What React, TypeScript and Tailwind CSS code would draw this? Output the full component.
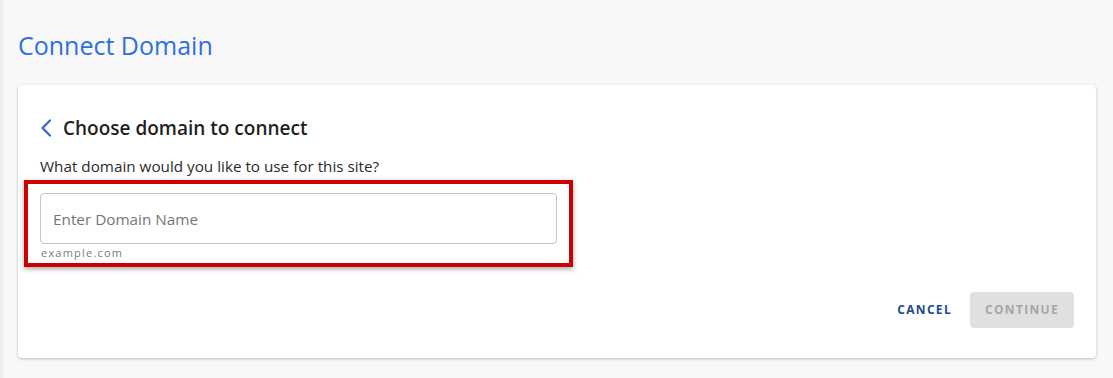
export default function App() {
  return (
    <div
      className="min-h-screen bg-[#f8f8f8] pl-[18px] pr-[17px] pt-[29px] shadow-[inset_6px_0_6px_-6px_rgba(0,0,0,0.12)]"
      style={{ fontFamily: '"Open Sans", "Noto Sans", sans-serif' }}
    >
      <h1 className="text-[25px] leading-[32px] text-[#2e6fe0]">Connect Domain</h1>

      <div className="mt-[24px] h-[273px] rounded-[4px] bg-white px-[22px] pt-[30px] shadow-[0_1px_3px_rgba(0,0,0,0.25)]">
        <div className="flex items-center">
          <button className="flex h-[26px] w-[12px] items-center justify-center text-[#2a6ad9]">
            <svg width="12" height="18" viewBox="0 0 12 18" fill="none" stroke="currentColor" strokeWidth="2.2" strokeLinecap="round" strokeLinejoin="round">
              <polyline points="10,1.5 2.5,9 10,16.5" />
            </svg>
          </button>
          <h2 className="ml-[11px] text-[19px] font-semibold leading-[26px] text-[#1f1f1f]">Choose domain to connect</h2>
        </div>

        <p className="mt-[14px] text-[15.25px] leading-[22px] text-[#2b2b2b]">
          What domain would you like to use for this site?
        </p>

        <div className="-mx-[16px] mt-[3px] w-[549px] border-[4px] border-[#cc0000] px-[12px] pb-[3px] pt-[9px] shadow-[0_2px_5px_rgba(0,0,0,0.35)]">
          <input
            type="text"
            placeholder="Enter Domain Name"
            className="block h-[51px] w-full rounded-[4px] border border-[#c4c4c4] bg-white px-[12px] text-[15.3px] text-[#333] placeholder:text-[#767676] outline-none"
          />
          <div className="mt-[2px] pl-[1px] text-[11px] leading-[14px] tracking-[0.11em] text-[#7a7a7a]">example.com</div>
        </div>

        <div className="mt-[25px] flex items-center justify-end gap-[2px]">
          <button className="h-[36px] px-[16px] text-[12px] font-bold tracking-[0.11em] text-[#1c4a8e]">CANCEL</button>
          <button
            disabled
            className="h-[36px] rounded-[4px] bg-[#e0e0e0] px-[15px] text-[12px] font-bold tracking-[0.11em] text-[#a6a6a6]"
          >
            CONTINUE
          </button>
        </div>
      </div>
    </div>
  );
}
